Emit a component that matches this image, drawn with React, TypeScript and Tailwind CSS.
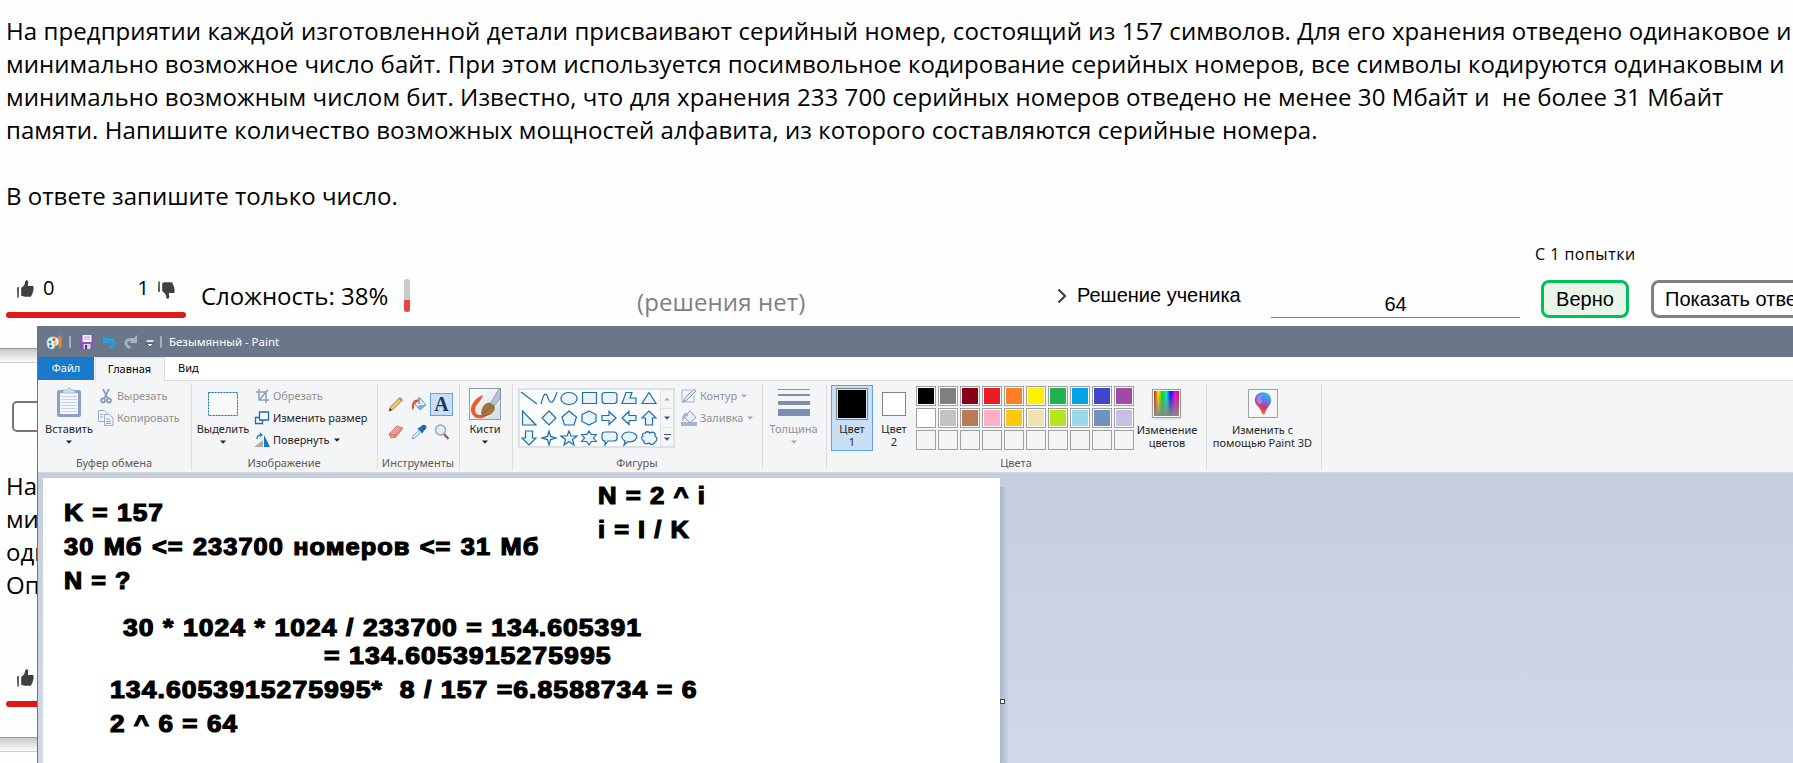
import React from "react";

const problem = [
  "На предприятии каждой изготовленной детали присваивают серийный номер, состоящий из 157 символов. Для его хранения отведено одинаковое и",
  "минимально возможное число байт. При этом используется посимвольное кодирование серийных номеров, все символы кодируются одинаковым и",
  "минимально возможным числом бит. Известно, что для хранения 233 700 серийных номеров отведено не менее 30 Мбайт и  не более 31 Мбайт",
  "памяти. Напишите количество возможных мощностей алфавита, из которого составляются серийные номера.",
];

const notes = [
  { text: "K = 157", cls: "left-[21px] top-[21px] scale-x-[1.115]" },
  { text: "30 Мб <= 233700 номеров <= 31 Мб", cls: "left-[21px] top-[55px] scale-x-[1.08] [word-spacing:1.2px]" },
  { text: "N = ?", cls: "left-[21px] top-[89px] scale-x-[1.07]" },
  { text: "30 * 1024 * 1024 / 233700 = 134.605391", cls: "left-[80px] top-[136px] scale-x-[1.128]" },
  { text: "= 134.6053915275995", cls: "left-[281px] top-[164px] scale-x-[1.133]" },
  { text: "134.6053915275995*  8 / 157 =6.8588734 = 6", cls: "left-[67px] top-[198px] scale-x-[1.128]" },
  { text: "2 ^ 6 = 64", cls: "left-[67px] top-[232px] scale-x-[1.11]" },
  { text: "N = 2 ^ i", cls: "left-[555px] top-[4px] scale-x-[1.095]" },
  { text: "i = I / K", cls: "left-[555px] top-[38px] scale-x-[1.08]" },
];

const palette = [
  "bg-black", "bg-[#7f7f7f]", "bg-[#880015]", "bg-[#ed1c24]", "bg-[#ff7f27]",
  "bg-[#fff200]", "bg-[#22b14c]", "bg-[#00a2e8]", "bg-[#3f48cc]", "bg-[#a349a4]",
  "bg-white", "bg-[#c3c3c3]", "bg-[#b97a57]", "bg-[#ffaec9]", "bg-[#ffc90e]",
  "bg-[#efe4b0]", "bg-[#b5e61d]", "bg-[#99d9ea]", "bg-[#7092be]", "bg-[#c8bfe7]",
];

const shapes = [
  "M1 1L17 13", "M1 13C4 1 6 1 8 7S13 14 17 1", "M9 1.5a8 6 0 1 0 .01 0z", "M2.5 1.5h14v11h-14z",
  "M5 1.5h9q3 0 3 3v5q0 3-3 3H5q-3 0-3-3v-5q0-3 3-3z", "M2 12.5L6 1.5h6L10 7h6v5.5z", "M9 1.5L16 12.5H2z",
  "M2.500 0v14H16z", "M9 0l7 7-7 7-7-7z", "M9 0l7.500 6L14 14H4.500L2 6z", "M9 0l7 3.500v7L9 14l-7-3.500v-7z",
  "M2 4.500h7V.5L16 7l-7 6.500v-4H2z", "M16 4.500H9V.5L2 7l7 6.500v-4h7z", "M9 0l7 7h-3.500v7h-7V7H2z",
  "M9 14l7-7h-3.500V0h-7v7H2z", "M9 0l1.600 5.400L16 7l-5.400 1.600L9 14l-1.600-5.400L2 7l5.400-1.600z", "M9 0l2 5h6l-4.500 3.500L14 14l-5-3.500L4 14l1.500-5.500L1 5h6z",
  "M9 0l2.300 3.500h5L13.500 7l2.800 3.500h-5L9 14l-2.300-3.500h-5L4.500 7 1.700 3.500h5z",
  "M5 1h9q3 0 3 3v3q0 3-3 3H8l-3 4v-4q-3 0-3-3V4q0-3 3-3z", "M5 10C-2 6 4 1 9 1s11 4 6 8c-2 2-6 2-7 1.500L4 14z",
  "M5 2c2-2 4-1 5 0 3-2 6 0 5 3 3 2 2 5 0 6-1 3-4 3-6 1-3 2-6 0-5-2-3-1-3-4-1-5-1-2 0-3 2-3z",
];

function Arrow({ cls = "fill-[#222]" }: { cls?: string }) {
  return <svg className={`h-[4px] w-[6px] ${cls}`} viewBox="0 0 6 4"><path d="M0 .5h6L3 3.800z" /></svg>;
}

function Thumb({ down = false }: { down?: boolean }) {
  return (
    <svg className={`h-[18px] w-[17px] fill-[#404040] ${down ? "-scale-y-100" : ""}`} viewBox="0 0 17 18">
      <path d="M0 7.500L1.800 7v10.500L.4 17.800zM4.200 8L6.500 6C8.500 4 7.500 1.500 9.200.3 11 .1 11.400 1.500 11.200 3L10.800 6h5c1 .4 1.200 1.500.5 2.200.6.800.5 1.700-.2 2.300.3.900 0 1.700-.6 2.200.2.900-.1 1.600-.8 2 0 1.500-.7 2-2 2H8c-1.500 0-2.500-.6-3.800-.6z" />
    </svg>
  );
}

function Group({ width, label, children }: { width: string; label?: string; children: React.ReactNode }) {
  return (
    <section className={`relative mt-[2px] flex h-[87px] shrink-0 border-r border-[#dcdee0] ${width}`}>
      {children}
      {label && <span className="absolute inset-x-0 bottom-0 -left-px text-center leading-[14px] text-[#5b5b5b]">{label}</span>}
    </section>
  );
}

function BigButton({ label, icon, width, disabled = false }: { label: string; icon: React.ReactNode; width: string; disabled?: boolean }) {
  return (
    <div className={`flex shrink-0 flex-col items-center pt-[4px] ${width} ${disabled ? "text-[#929292]" : ""}`}>
      <div className="flex h-[34px] items-start justify-center">{icon}</div>
      <span className="mt-[1px] leading-[14px]">{label}</span>
      <span className="mt-[4px] flex"><Arrow cls={disabled ? "fill-[#aaa]" : "fill-[#222]"} /></span>
    </div>
  );
}

function SmallButton({ label, icon, disabled = false, arrow = false }: { label: string; icon: React.ReactNode; disabled?: boolean; arrow?: boolean }) {
  return (
    <div className={`flex h-[22px] items-center ${disabled ? "text-[#929292]" : ""}`}>
      <span className="mr-[3px] flex w-[16px] justify-center">{icon}</span>
      <span className="tracking-[-0.05px]">{label}</span>
      {arrow && <span className="ml-[4px] flex"><Arrow cls={disabled ? "fill-[#aaa]" : "fill-[#222]"} /></span>}
    </div>
  );
}

const svg16 = "h-[16px] w-[16px]";

function TitleBar() {
  return (
    <div className="flex h-[31px] shrink-0 items-center bg-[#697789] pl-[8px] text-[11.500px] text-white">
      <svg className="h-[16px] w-[17px]" viewBox="0 0 17 16">
        <path d="M1 10C0 5 4 2 8 3c4 0 6 3 5 6s-3 2-4 3 0 3-3 3-5-2-5-5z" fill="#d9effa" stroke="#8ebbd8" strokeWidth=".6" />
        <circle cx="4" cy="8" r="1.500" fill="#38a93c" /><circle cx="8" cy="5.500" r="1.500" fill="#e8473a" />
        <circle cx="4.500" cy="12" r="1.500" fill="#2876d0" /><circle cx="9" cy="9.500" r="1.500" fill="#f5b92b" />
        <path d="M12.500 5h3v7l-1.500 3-1.500-3z" fill="#f08a1d" /><path d="M12 1l2 1 2-1-.5 4h-3z" fill="#c68a4c" />
      </svg>
      <span className="ml-[6px] h-[12px] w-[2px] rounded bg-[#a7b0bb]" />
      <svg className="ml-[9px] h-[14px] w-[14px]" viewBox="0 0 14 14">
        <path d="M0 0h14v14H1.500L0 12.500z" fill="#8657b5" /><path d="M2.500 0h9v7h-9z" fill="#f3effa" />
        <path d="M4 2h6M4 4h6" stroke="#b9a5d4" /><path d="M3.500 9h7v5h-7z" fill="#d8d3e4" /><path d="M5 10h2v4H5z" fill="#51307d" />
      </svg>
      <svg className="ml-[9px] h-[14px] w-[13px]" viewBox="0 0 13 14"><path d="M3 4.500h4c6 0 5 7-.5 8" fill="none" stroke="#22a0ea" strokeWidth="2.800" /><path d="M0 0v8h7.500z" fill="#22a0ea" /></svg>
      <svg className="ml-[8px] h-[14px] w-[13px]" viewBox="0 0 13 14"><path d="M10 4.500H6c-6 0-5 7 .5 8" fill="none" stroke="#a3b2c4" strokeWidth="2.800" /><path d="M13 0v8H5.500z" fill="#a3b2c4" /></svg>
      <svg className="ml-[9px] mt-[4px] h-[8px] w-[8px]" viewBox="0 0 8 8"><path d="M.5 1h7" stroke="#fff" strokeWidth="1.500" /><path d="M.5 3.500h7L4 7z" fill="#fff" stroke="#222" strokeWidth=".6" /></svg>
      <span className="ml-[6px] h-[12px] w-[2px] rounded bg-[#a7b0bb]" />
      <span className="ml-[7px] tracking-[-0.02px]">Безымянный - Paint</span>
    </div>
  );
}

function Tabs() {
  return (
    <div className="flex h-[24px] shrink-0 bg-white text-[11px]">
      <div className="flex h-[23px] w-[56px] items-center justify-center bg-[#1979ca] text-white">Файл</div>
      <div className="ml-px flex w-[70px] items-center justify-center border-x border-t border-[#d9dbdd] bg-[#f4f5f7] pb-px pr-px">Главная</div>
      <div className="flex flex-1 items-center border-b border-[#d9dbdd] pl-[13px]">Вид</div>
    </div>
  );
}

function Ribbon() {
  return (
    <div className="flex h-[92px] shrink-0 border-b border-[#d3d6da] bg-[#f4f5f7] text-[11px] text-[#262626]">
      <Group width="w-[154px]" label="Буфер обмена">
        <BigButton width="w-[62px]" label="Вставить" icon={
          <svg className="h-[31px] w-[26px]" viewBox="0 0 26 31">
            <rect x="1" y="3" width="24" height="27" rx="2" fill="#8c9fc6" /><rect x="4" y="6" width="18" height="21" fill="#f4f8fe" />
            <path d="M5 9.500h16M5 12.500h16M5 15.500h16M5 18.500h16M5 21.500h16M5 24.500h16" stroke="#c3d2ea" />
            <path d="M7 6V3h4q2-4 4 0h4v3z" fill="#d6deeb" stroke="#95a6c2" strokeWidth=".7" />
          </svg>} />
        <div className="-ml-[2px] flex flex-col pt-[2px]">
          <SmallButton disabled label="Вырезать" icon={<svg className={svg16} viewBox="0 0 16 16" fill="none" stroke="#8d9fbe" strokeWidth="1.800"><path d="M5 1l5 10M11 1L6 11" /><circle cx="5" cy="12.500" r="2" /><circle cx="11" cy="12.500" r="2" /></svg>} />
          <SmallButton disabled label="Копировать" icon={<svg className={svg16} viewBox="0 0 16 16" fill="#f0f5fc" stroke="#9aacca"><path d="M.5.5h6l3 3v8h-9z" /><path d="M6.500 4.500h5l3.500 3.500v7.500H6.500z" /><path d="M2 4.500h3M2 7h3M8 9h4M8 11.500h5M8 13.500h5" /></svg>} />
        </div>
      </Group>
      <Group width="w-[186px]" label="Изображение">
        <BigButton width="w-[62px]" label="Выделить" icon={<svg className="mt-[4px] h-[26px] w-[32px]" viewBox="0 0 32 26"><rect x="1.500" y="1.500" width="29" height="23" fill="#f8fafc" stroke="#1569b0" strokeDasharray="2 1" /></svg>} />
        <div className="flex flex-col pt-[2px]">
          <SmallButton disabled label="Обрезать" icon={<svg className={svg16} viewBox="0 0 16 16" fill="none" stroke="#8d9fbe" strokeWidth="1.500"><path d="M5 1v11h10M2 4h10v11M5 12l9-10" /></svg>} />
          <SmallButton label="Изменить размер" icon={<svg className={svg16} viewBox="0 0 16 16" fill="#fff" stroke="#1a6aac" strokeWidth="1.300"><path d="M1.500 7.500h7v6h-7z" /><path d="M5.500 2h9v8h-9z" /></svg>} />
          <SmallButton arrow label="Повернуть" icon={<svg className={svg16} viewBox="0 0 16 16"><path d="M0 15l9-7v7z" fill="#a9adb1" /><path d="M10 3v12h6z" fill="#1977bb" /><path d="M3 7q0-4 4-4" fill="none" stroke="#2583d5" strokeWidth="1.500" /><path d="M6 .5L9 3 6 5.500z" fill="#2583d5" /></svg>} />
        </div>
      </Group>
      <Group width="w-[82px]" label="Инструменты">
        <div className="grid h-[72px] grid-cols-[23px_23px_23px] grid-rows-[24px_24px] content-start gap-y-[4px] pl-[6px] pt-[9px] [&>*]:place-self-center">
          <svg className={svg16} viewBox="0 0 16 16"><path d="M1 15l1.300-4 9-9L14 4.500l-9 9z" fill="#f3c968" stroke="#7c6342" strokeWidth=".7" /><path d="M10.500 2.500l1.500-1.500L15 4 13.500 5.500z" fill="#d4747e" /><path d="M1 15l1-3 2 2z" fill="#333" /></svg>
          <svg className={svg16} viewBox="0 0 16 16"><path d="M9 2l6 7-6 5-5-6z" fill="#dcecf8" stroke="#6e98bd" /><path d="M9 9l6 0-6 5-3-3z" fill="#78add8" /><path d="M8 4C3 2 0 7 1 14l2-2c0-4 1-6 4-6z" fill="#e75129" /><path d="M8 8V1" stroke="#777" /></svg>
          <span className="flex h-[23px] w-[23px] items-center justify-center border border-[#62a2e4] bg-[#c9dff5] font-['Liberation_Serif',serif] text-[20px] font-bold text-[#17375e]">A</span>
          <svg className={svg16} viewBox="0 0 16 16"><path d="M1 10l8-8 6 2-7 9-5 1z" fill="#ef9a98" stroke="#c96865" strokeWidth=".8" /><path d="M1 10l6 1 8-7M7 11v3" fill="none" stroke="#c96865" strokeWidth=".8" /></svg>
          <svg className={svg16} viewBox="0 0 16 16"><path d="M1 15l1-3 7-7 2 2-7 7z" fill="#d7e7f3" stroke="#6685a2" strokeWidth=".7" /><path d="M6.500 4.500l2-1 3-2.500q4-1 4 3l-3 3.500-1 2z" fill="#1e68b2" /></svg>
          <svg className={svg16} viewBox="0 0 16 16"><path d="M9.500 9.500l5 5.500" stroke="#96694b" strokeWidth="2.600" /><circle cx="6.500" cy="6" r="5" fill="#dceffa" stroke="#9ba8b7" strokeWidth="1.500" /></svg>
        </div>
      </Group>
      <Group width="w-[53px]">
        <BigButton width="w-[50px]" label="Кисти" icon={
          <svg className="mt-px h-[32px] w-[32px]" viewBox="0 0 32 32">
            <defs><linearGradient id="pc" x2="1" y2="1"><stop stopColor="#fff" /><stop offset="1" stopColor="#cde0e8" /></linearGradient></defs>
            <rect x=".5" y=".5" width="31" height="31" fill="url(#pc)" stroke="#949ca5" />
            <path d="M14 7C8 9 1 16 2 23c2 9 12 9 16 4-6 1-12 0-12-5 0-6 7-9 8-15z" fill="#ee5a2b" />
            <path d="M21 16L30 1h1.500v9L25 18z" fill="#b4c3d6" stroke="#697d96" strokeWidth=".6" />
            <path d="M13 28c-1-6 1-12 7-13l5 3c2 6-5 10-12 10z" fill="#a8743e" stroke="#75502d" strokeWidth=".7" /><path d="M15 26q3-5 7-8" fill="none" stroke="#7b4f27" strokeWidth=".8" />
          </svg>} />
      </Group>
      <Group width="w-[250px]" label="Фигуры">
        <div className="ml-[5px] mt-[5px] flex h-[60px] w-[157px] border-2 border-[#dde0e4] bg-[#fbfcfd]">
          <div className="grid w-[140px] grid-cols-[repeat(7,20px)] grid-rows-[repeat(3,20px)]">
            {shapes.map((d, i) => <svg key={i} className="mt-px h-[14px] w-[18px] overflow-visible" viewBox="0 0 18 14"><path d={d} fill={i < 2 ? "none" : "#eaf3f8"} stroke="#1e6dac" strokeWidth="1.200" /></svg>)}
          </div>
          <div className="flex flex-1 flex-col divide-y divide-[#e1e3e7] border-l border-[#dde0e4] bg-[#f4f5f7]">
            <span className="flex flex-1 items-center justify-center"><Arrow cls="rotate-180 fill-[#b6bac2]" /></span>
            <span className="flex flex-1 items-center justify-center"><Arrow cls="fill-[#405574]" /></span>
            <span className="flex flex-1 flex-col items-center justify-center gap-[2px]"><i className="h-px w-[7px] bg-[#405574]" /><Arrow cls="fill-[#405574]" /></span>
          </div>
        </div>
        <div className="ml-[6px] flex flex-col pt-[2px]">
          <SmallButton disabled arrow label="Контур" icon={<svg className={svg16} viewBox="0 0 16 16"><path d="M13 7v7H1V2h9" fill="none" stroke="#a1b0c6" /><path d="M2 14l2-4 9-9 2 2-9 9z" fill="#e5edf6" stroke="#8195b5" /></svg>} />
          <SmallButton disabled arrow label="Заливка" icon={<svg className={svg16} viewBox="0 0 16 16"><path d="M0 12h16v4H0z" fill="#a7b5d0" /><path d="M9 1l6 6.500-6 5.500-6-6z" fill="#e5edf6" stroke="#899bb9" /><path d="M7 3C2 2 1 7 1 11l2-1c0-3 2-4 4-4z" fill="#a7b5d0" /></svg>} />
        </div>
      </Group>
      <Group width="w-[64px]">
        <BigButton disabled width="w-[61px]" label="Толщина" icon={<div className="flex w-[32px] flex-col pt-[2px]"><i className="h-px bg-[#7b8db0]" /><i className="mt-[4px] h-[2px] bg-[#7b8db0]" /><i className="mt-[5px] h-[4px] bg-[#7b8db0]" /><i className="mt-[4px] h-[7px] bg-[#7b8db0]" /></div>} />
      </Group>
      <Group width="w-[380px]" label="Цвета">
        <div className="ml-[4px] mt-[2px] flex h-[66px] w-[42px] flex-col items-center border border-[#62a2e4] bg-[#c9dff5] pt-[2px]">
          <span className="h-[32px] w-[32px] border border-[#808080] bg-black outline-1 -outline-offset-2 outline-[#d9e8f6]" />
          <span className="mt-[2px] text-center leading-[13px]">Цвет<br />1</span>
        </div>
        <div className="ml-[1px] mt-[2px] flex w-[40px] flex-col items-center pt-[7px]">
          <span className="h-[24px] w-[24px] border border-[#808080] bg-white" />
          <span className="mt-[6px] text-center leading-[13px]">Цвет<br />2</span>
        </div>
        <div className="ml-[2px] mt-[3px] grid h-[64px] w-[218px] grid-cols-[repeat(10,20px)] grid-rows-[repeat(3,20px)] gap-[2px]">
          {Array.from({ length: 30 }, (_, i) => (
            <span key={i} className={`border border-[#a0a0a0] p-px ${i < 20 ? "bg-white" : ""}`}><i className={`block h-full w-full ${palette[i] ?? ""}`} /></span>
          ))}
        </div>
        <div className="flex w-[66px] flex-col items-center pt-[6px]">
          <span className="h-[29px] w-[29px] -translate-x-px border border-[#9b9b9b] bg-white p-px shadow-sm"><i className="block h-full w-full bg-[linear-gradient(to_bottom,transparent,#888),linear-gradient(to_right,#e00,#fe0,#0d0,#0ee,#00f,#e0e,#f03)]" /></span>
          <span className="mt-[5px] text-center leading-[13px]">Изменение<br />цветов</span>
        </div>
      </Group>
      <Group width="w-[115px]">
        <div className="flex flex-1 flex-col items-center pr-[3px] pt-[6px]">
          <span className="flex h-[29px] w-[30px] items-center justify-center border border-[#a0a0a0] bg-[#f7f7f7]">
            <svg className="h-[25px] w-[18px]" viewBox="0 0 20 25">
              <defs><linearGradient id="dr" x1=".7" x2=".3" y2="1"><stop stopColor="#1cc8e8" /><stop offset=".35" stopColor="#6678e8" /><stop offset=".6" stopColor="#c43a80" /><stop offset=".8" stopColor="#ef4a45" /><stop offset="1" stopColor="#ffc928" /></linearGradient></defs>
              <path d="M10 0c6 0 9 4 9 9 0 6-6 9-7 15l-3 1c0-7-8-10-8-16 0-5 3-9 9-9z" fill="url(#dr)" /><path d="M3 6q2-4 5-3l1 9-4 2q-3-4-2-8z" fill="#b18cff" opacity=".7" />
            </svg>
          </span>
          <span className="mt-[5px] text-center leading-[13px]">Изменить с<br />помощью Paint 3D</span>
        </div>
      </Group>
    </div>
  );
}

function Workspace() {
  return (
    <div className="relative min-h-0 flex-1 bg-gradient-to-b from-[#c5cedf] to-[#cfd9e7] pl-[5px] pt-[5px]">
      <div className="flex h-full">
        <div className="relative h-full w-[957px] bg-white font-['Liberation_Sans',sans-serif] text-[23.5px] font-bold tracking-[0.95px] text-black">
          {notes.map((n) => (
            <p key={n.text} className={`absolute origin-left whitespace-pre leading-[28px] [-webkit-text-stroke:1.2px_black] ${n.cls}`}>{n.text}</p>
          ))}
        </div>
        <div className="mt-[9px] w-[8px] bg-gradient-to-r from-[#a9b7cb] to-[#c6d0e0]" />
      </div>
      <span className="absolute left-[962px] top-[226px] h-[5px] w-[5px] border border-[#444] bg-white" />
    </div>
  );
}

function PaintWindow() {
  return (
    <div className="absolute left-[37px] top-[326px] flex h-[437px] w-[1756px] flex-col overflow-hidden border-l border-[#697789] font-['Noto_Sans',sans-serif]">
      <TitleBar />
      <Tabs />
      <Ribbon />
      <Workspace />
    </div>
  );
}

function CardGap() {
  return <div className="h-[15px] border-b border-[#ccc] border-t border-t-[#999] bg-gradient-to-b from-[#c8c8c8] to-[#fcfcfc]" />;
}

export default function App() {
  return (
    <main className="relative h-[763px] w-[1793px] overflow-hidden bg-[#fefefe] font-['Open_Sans','Noto_Sans',sans-serif] text-[24px] text-black">
      <div className="flex h-[348px] flex-col">
        <div className="whitespace-pre pl-[6px] pt-[14px] leading-[33px] tracking-[0.075px]">
          {problem.map((l) => <p key={l}>{l}</p>)}
          <p className="mt-[33px] tracking-[0.03px]">В ответе запишите только число.</p>
        </div>
        <div className="mt-[28px] flex h-[80px] items-start whitespace-nowrap *:shrink-0">
          <div className="ml-[6px] mt-[35px] w-[180px]">
            <div className="flex h-[37px] items-start justify-between pl-[11px] pr-[11px] pt-px text-[20px] leading-[24px]">
              <div className="flex gap-[9px]"><span className="mt-[4px]"><Thumb /></span><span>0</span></div>
              <div className="flex gap-[9px]"><span>1</span><span className="mt-[5px]"><Thumb down /></span></div>
            </div>
            <div className="h-[6px] rounded-full bg-[#e11818]" />
          </div>
          <span className="ml-[15px] mt-[39px] w-[188px] leading-[33px]">Сложность: 38%</span>
          <span className="ml-[15px] mt-[39px] flex h-[33px] w-[6px] flex-col justify-end overflow-hidden rounded-[3px] bg-[#cacaca]"><i className="h-[12px] bg-[#e84242]" /></span>
          <span className="ml-[227px] mt-[45px] w-[169px] leading-[33px] tracking-[0.1px] text-[#808080]">(решения нет)</span>
          <svg className="ml-[251px] mt-[48px] h-[16px] w-[10px]" viewBox="0 0 10 16" fill="none" stroke="#404040" strokeWidth="2.200"><path d="M1.500 1.500L8 8l-6.500 6.500" /></svg>
          <span className="ml-[10px] mt-[43px] w-[164px] font-['Liberation_Sans',sans-serif] text-[20px] leading-[24px]">Решение ученика</span>
          <span className="ml-[30px] mt-[50px] h-[28px] w-[249px] border-b border-[#808080] text-center font-['Liberation_Sans',sans-serif] text-[20px] leading-[28px]">64</span>
          <div className="ml-[15px] flex w-[104px] flex-col">
            <span className="mt-[3px] text-[16px] leading-[22px] tracking-[0.48px]">С 1 попытки</span>
            <button className="ml-[6px] mt-[15px] h-[38px] w-[88px] rounded-[8px] border-[3px] border-[#00c05a] bg-[#e8f5e8] font-['Liberation_Sans',sans-serif] text-[20px] leading-[24px]">Верно</button>
          </div>
          <button className="ml-[12px] mt-[40px] h-[38px] w-[170px] rounded-[8px] border-[3px] border-[#808080] bg-white pl-[11px] text-left font-['Liberation_Sans',sans-serif] text-[20px] leading-[24px]">Показать ответ</button>
        </div>
      </div>
      <CardGap />
      <div className="flex h-[374px] flex-col">
        <div className="ml-[12px] mt-[38px] h-[31px] w-[120px] shrink-0 rounded-[5px] border-2 border-[#767676] bg-white" />
        <div className="mt-[37px] whitespace-pre pl-[6px] leading-[33px]">
          <p>На</p><p>ми</p><p>одн</p><p>Оп</p>
        </div>
        <div className="ml-[6px] mt-[68px] w-[180px]">
          <div className="h-[32px] pl-[11px]"><Thumb /></div>
          <div className="h-[6px] rounded-full bg-[#e11818]" />
        </div>
      </div>
      <CardGap />
      <PaintWindow />
    </main>
  );
}
